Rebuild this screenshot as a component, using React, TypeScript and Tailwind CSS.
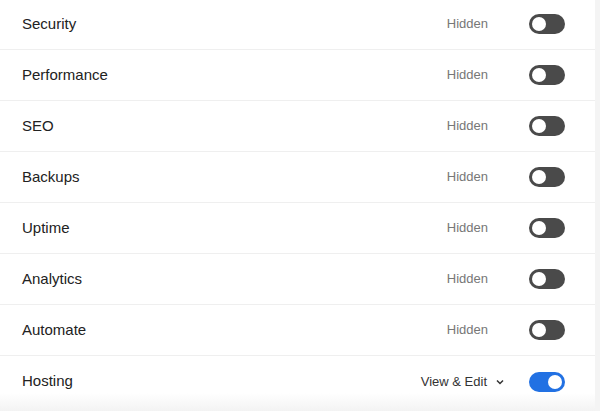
const rows = [
  "Security",
  "Performance",
  "SEO",
  "Backups",
  "Uptime",
  "Analytics",
  "Automate",
];

function Toggle({ on }: { on: boolean }) {
  return (
    <div
      className={
        on
          ? "flex h-[20px] w-[36px] items-center justify-end rounded-full bg-[#2271e3] px-[3px]"
          : "flex h-[20px] w-[36px] items-center justify-start rounded-full bg-[#4a4a4a] px-[3px]"
      }
    >
      <div className="h-[14px] w-[14px] rounded-full bg-white" />
    </div>
  );
}

export default function App() {
  return (
    <div
      className="relative flex h-[411px] w-[600px] overflow-hidden bg-[#f4f4f4]"
      style={{ fontFamily: "'Liberation Sans', Arial, sans-serif" }}
    >
      <div className="-mt-[1px] flex w-[595px] flex-col bg-white">
        {rows.map((name) => (
          <div
            key={name}
            className="flex h-[51px] shrink-0 items-center border-b border-[#efefef] pl-[22px] pr-[30px]"
          >
            <span className="flex-1 text-[15px] text-[#222]">{name}</span>
            <span className="mr-[41px] text-[13px] text-[#777]">Hidden</span>
            <Toggle on={false} />
          </div>
        ))}
        <div className="flex h-[51px] shrink-0 items-center pl-[22px] pr-[30px]">
          <span className="flex-1 text-[15px] text-[#222]">Hosting</span>
          <span className="mr-[25px] flex items-center gap-[9px] text-[13px] text-[#333]">
            View &amp; Edit
            <svg width="8" height="6" viewBox="0 0 8 6" fill="none">
              <path d="M1 1.5 L4 4.5 L7 1.5" stroke="#333" strokeWidth="1.5" />
            </svg>
          </span>
          <Toggle on={true} />
        </div>
      </div>
      <div className="pointer-events-none absolute bottom-0 left-0 h-[18px] w-[595px] bg-gradient-to-b from-transparent to-[#f3f3f3]" />
    </div>
  );
}
